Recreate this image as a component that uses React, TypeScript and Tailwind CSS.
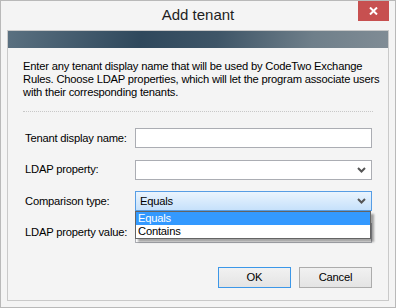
import { ReactNode } from 'react';

const Chevron = () => (
  <svg width="9" height="6" viewBox="0 0 9 6" className="shrink-0">
    <polyline points="1,1 4.5,4.5 8,1" fill="none" stroke="#555" strokeWidth="2" />
  </svg>
);

const Row = ({ label, children }: { label: string; children: ReactNode }) => (
  <div className="flex items-center h-[20px]">
    <div className="w-[112px] pl-[2px] whitespace-nowrap">{label}</div>
    {children}
  </div>
);

const TextBox = () => <div className="w-[237px] h-[20px] border border-[#abadb3] bg-white" />;

const Select = ({ value, active }: { value?: string; active?: boolean }) => (
  <div
    className={`w-[237px] h-[20px] flex items-center justify-between pl-[4px] pr-[5px] border ${
      active ? 'border-[#569de5] bg-gradient-to-b from-[#eaf4fd] to-[#c6e1fb]' : 'border-[#abadb3] bg-white'
    }`}
  >
    <span>{value}</span>
    <Chevron />
  </div>
);

export default function App() {
  return (
    <div
      className="w-[396px] h-[308px] flex flex-col border border-[#b9b9b9] bg-[#f4f4f4] text-[11.2px] tracking-[-0.2px] text-black"
      style={{ fontFamily: '"Liberation Sans", Arial, sans-serif' }}
    >
      <div className="relative h-[29px] flex items-center justify-center">
        <span className="text-[15px] tracking-normal text-[#1e1e1e]">Add tenant</span>
        <div className="absolute right-[6px] top-0 w-[31px] h-[20px] bg-[#c75050] flex items-center justify-center">
          <svg width="9" height="8" viewBox="0 0 9 8">
            <path d="M1 0.5 L8 7.5 M8 0.5 L1 7.5" stroke="#fff" strokeWidth="2" />
          </svg>
        </div>
      </div>

      <div className="mx-[6px] mb-[6px] flex-1 flex flex-col border border-[#c9c9c9]">
        <div
          className="h-[17px]"
          style={{
            background:
              'linear-gradient(100deg, #5a7080 0%, #2f485c 35%, #3e5567 55%, #6f7f8a 80%, #808c95 100%)',
          }}
        />
        <div className="pl-[15px] pr-[8px] pt-[12px] leading-[13px]">
          Enter any tenant display name that will be used by CodeTwo Exchange
          <br />
          Rules. Choose LDAP properties, which will let the program associate users
          <br />
          with their corresponding tenants.
        </div>
        <div className="mx-[15px] mt-[12px] border-t border-dotted border-[#c8c8c8]" />

        <div className="relative flex flex-col gap-[11.5px] pl-[15px] pt-[16px]">
          <Row label="Tenant display name:">
            <TextBox />
          </Row>
          <Row label="LDAP property:">
            <Select />
          </Row>
          <Row label="Comparison type:">
            <div className="relative">
              <Select value="Equals" active />
              <div className="absolute left-0 top-[20px] w-[236px] border border-[#646464] bg-white shadow-[3px_3px_2px_rgba(0,0,0,0.35)] z-10">
                <div className="h-[13px] leading-[13px] pl-[2px] bg-[#3399ff] text-white">Equals</div>
                <div className="h-[13px] leading-[13px] pl-[2px]">Contains</div>
              </div>
            </div>
          </Row>
          <Row label="LDAP property value:">
            <TextBox />
          </Row>
        </div>

        <div className="mt-auto mb-[12px] flex justify-end gap-[8px] pr-[16px]">
          <button className="w-[73px] h-[21px] border border-[#3c97e8] bg-gradient-to-b from-[#f1f1f1] to-[#e4e4e4]">
            OK
          </button>
          <button className="w-[73px] h-[21px] border border-[#acacac] bg-gradient-to-b from-[#f1f1f1] to-[#e4e4e4]">
            Cancel
          </button>
        </div>
      </div>
    </div>
  );
}
